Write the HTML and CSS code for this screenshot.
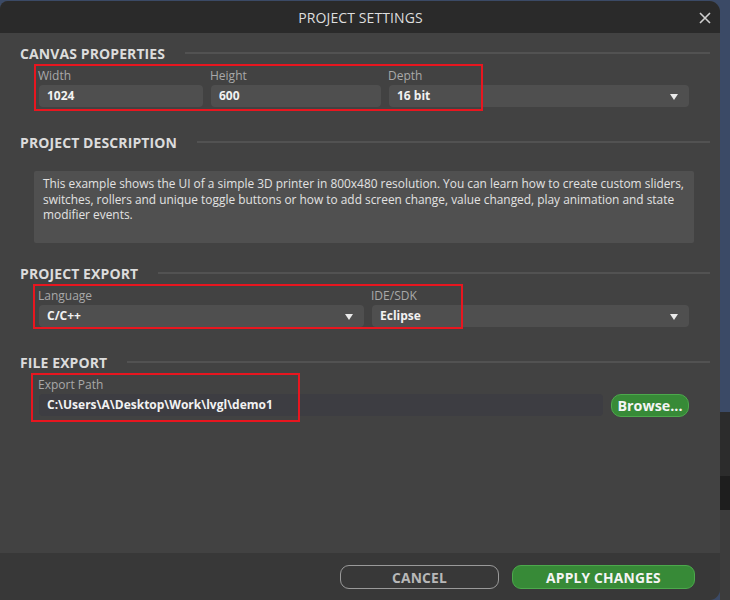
FILE: index.html
```html
<!DOCTYPE html>
<html>
<head>
<meta charset="utf-8">
<link rel="stylesheet" href="styles.css">
</head>
<body>
<div class="dialog">
  <div class="header">
    <span class="title">PROJECT SETTINGS</span>
    <svg class="close" width="14" height="14" viewBox="0 0 14 14"><path d="M2 2 L12 12 M12 2 L2 12" stroke="#cfcfcf" stroke-width="1.6" fill="none"/></svg>
  </div>
  <div class="content">
    <div class="section-title"><span>CANVAS PROPERTIES</span><i class="rule"></i></div>
    <div class="row row-canvas">
      <div class="field w-width">
        <label>Width</label>
        <div class="input">1024</div>
      </div>
      <div class="field w-height">
        <label>Height</label>
        <div class="input">600</div>
      </div>
      <div class="field grow">
        <label>Depth</label>
        <div class="input select">16 bit<span class="caret"></span></div>
      </div>
      <div class="hl hl-canvas"></div>
    </div>

    <div class="section-title st-desc"><span>PROJECT DESCRIPTION</span><i class="rule"></i></div>
    <div class="desc">This example shows the UI of a simple 3D printer in 800x480 resolution. You can learn how to create custom sliders, switches, rollers and unique toggle buttons or how to add screen change, value changed, play animation and state modifier events.</div>

    <div class="section-title st-export"><span>PROJECT EXPORT</span><i class="rule"></i></div>
    <div class="row row-export">
      <div class="field w-lang">
        <label>Language</label>
        <div class="input select">C/C++<span class="caret"></span></div>
      </div>
      <div class="field grow">
        <label>IDE/SDK</label>
        <div class="input select">Eclipse<span class="caret"></span></div>
      </div>
      <div class="hl hl-export"></div>
    </div>

    <div class="section-title st-file"><span>FILE EXPORT</span><i class="rule"></i></div>
    <div class="row row-file">
      <div class="field grow">
        <label>Export Path</label>
        <div class="path-line">
          <div class="input path">C:\Users\A\Desktop\Work\lvgl\demo1</div>
          <button class="browse">Browse...</button>
        </div>
      </div>
      <div class="hl hl-file"></div>
    </div>
  </div>
  <div class="footer">
    <button class="btn cancel">CANCEL</button>
    <button class="btn apply">APPLY CHANGES</button>
  </div>
</div>
</body>
</html>
```
FILE: styles.css
```css
html, body {
  margin: 0;
  padding: 0;
}
body {
  width: 730px;
  height: 600px;
  overflow: hidden;
  font-family: "Open Sans", "Noto Sans", sans-serif;
  background:
    linear-gradient(to bottom, #3b4a66 0, #3b4a66 412px, #2c2c2c 412px, #2c2c2c 476px, #1e1e1e 476px, #1e1e1e 510px, #3c3c3c 510px) right top / 10px 600px no-repeat,
    #3b4a66;
}
.dialog {
  margin-top: 1px;
  width: 720px;
  height: 599px;
  border-radius: 8px 11px 11px 0;
  overflow: hidden;
  display: flex;
  flex-direction: column;
  background: #424242;
}
.header {
  height: 32px;
  flex: none;
  background: #2a2a2a;
  display: flex;
  align-items: center;
  justify-content: center;
  position: relative;
}
.title {
  color: #dedede;
  font-size: 14px;
  letter-spacing: 0.1px;
  margin-left: 1px;
}
.close {
  position: absolute;
  right: 8px;
  top: 10px;
}
.content {
  flex: 1;
  padding: 10px 0 0 20px;
}
.section-title {
  display: flex;
  align-items: center;
  height: 20px;
  color: #dcdcdc;
  font-weight: 700;
  font-size: 14px;
  letter-spacing: 0.1px;
}
.section-title .rule {
  flex: 1;
  height: 2px;
  background: #525252;
  margin: 0 10px 0 20px;
}
.st-desc { margin-top: 25px; }
.st-export { margin-top: 20px; }
.st-file { margin-top: 25px; }
.row {
  display: flex;
  gap: 8px;
  margin-left: 19px;
  width: 650px;
  position: relative;
}
.row-canvas { margin-top: 3px; }
.row-export { margin-top: 3px; }
.row-file { margin-top: 3px; }
.field {
  display: flex;
  flex-direction: column;
}
.field label {
  color: #a9a9a9;
  font-size: 12px;
  height: 19px;
  line-height: 19px;
  margin-left: -1px;
}
.w-width { width: 164px; }
.w-height { width: 170px; }
.w-lang { width: 325px; }
.grow { flex: 1; }
.input {
  height: 22px;
  line-height: 22px;
  background: #4f4f4f;
  border-radius: 4px;
  color: #f2f2f2;
  font-weight: 700;
  font-size: 12px;
  padding-left: 8px;
  position: relative;
}
.select .caret {
  position: absolute;
  right: 11px;
  top: 9px;
  width: 0;
  height: 0;
  border-left: 4px solid transparent;
  border-right: 4px solid transparent;
  border-top: 6px solid #eaeaea;
}
.desc {
  margin: 19px 0 0 14px;
  width: 651px;
  height: 62px;
  background: #505050;
  border-radius: 2px;
  color: #e2e2e2;
  font-size: 11.9px;
  line-height: 15.5px;
  padding: 5px 0 5px 9px;
}
.path-line {
  display: flex;
  gap: 8px;
}
.input.path {
  flex: 1;
  background: #3d3d42;
}
.browse {
  width: 78px;
  height: 23px;
  border-radius: 10px;
  border: 1px solid #4ca94c;
  background: #378a37;
  color: #f4f4f4;
  font-family: inherit;
  font-weight: 700;
  font-size: 14.3px;
  padding: 0;
}
.hl {
  position: absolute;
  border: 2px solid #e8161f;
  pointer-events: none;
}
.hl-canvas { left: -5px; top: -2px; width: 445px; height: 43px; }
.hl-export { left: -6px; top: -2px; width: 426px; height: 41px; }
.hl-file { left: -8px; top: -2px; width: 265px; height: 45px; }
.footer {
  height: 47px;
  flex: none;
  background: #383838;
  display: flex;
  align-items: flex-start;
  padding: 12px 0 0 340px;
  box-sizing: border-box;
  gap: 13px;
}
.btn {
  height: 24px;
  border-radius: 9px;
  font-family: inherit;
  font-weight: 700;
  font-size: 13.8px;
  padding: 0;
  letter-spacing: 0.2px;
}
.cancel {
  width: 159px;
  background: transparent;
  border: 1.5px solid #9a9a9a;
  color: #b8b8b8;
}
.apply {
  width: 183px;
  background: #378a37;
  border: 1px solid #4ca94c;
  color: #f4f4f4;
}
```
